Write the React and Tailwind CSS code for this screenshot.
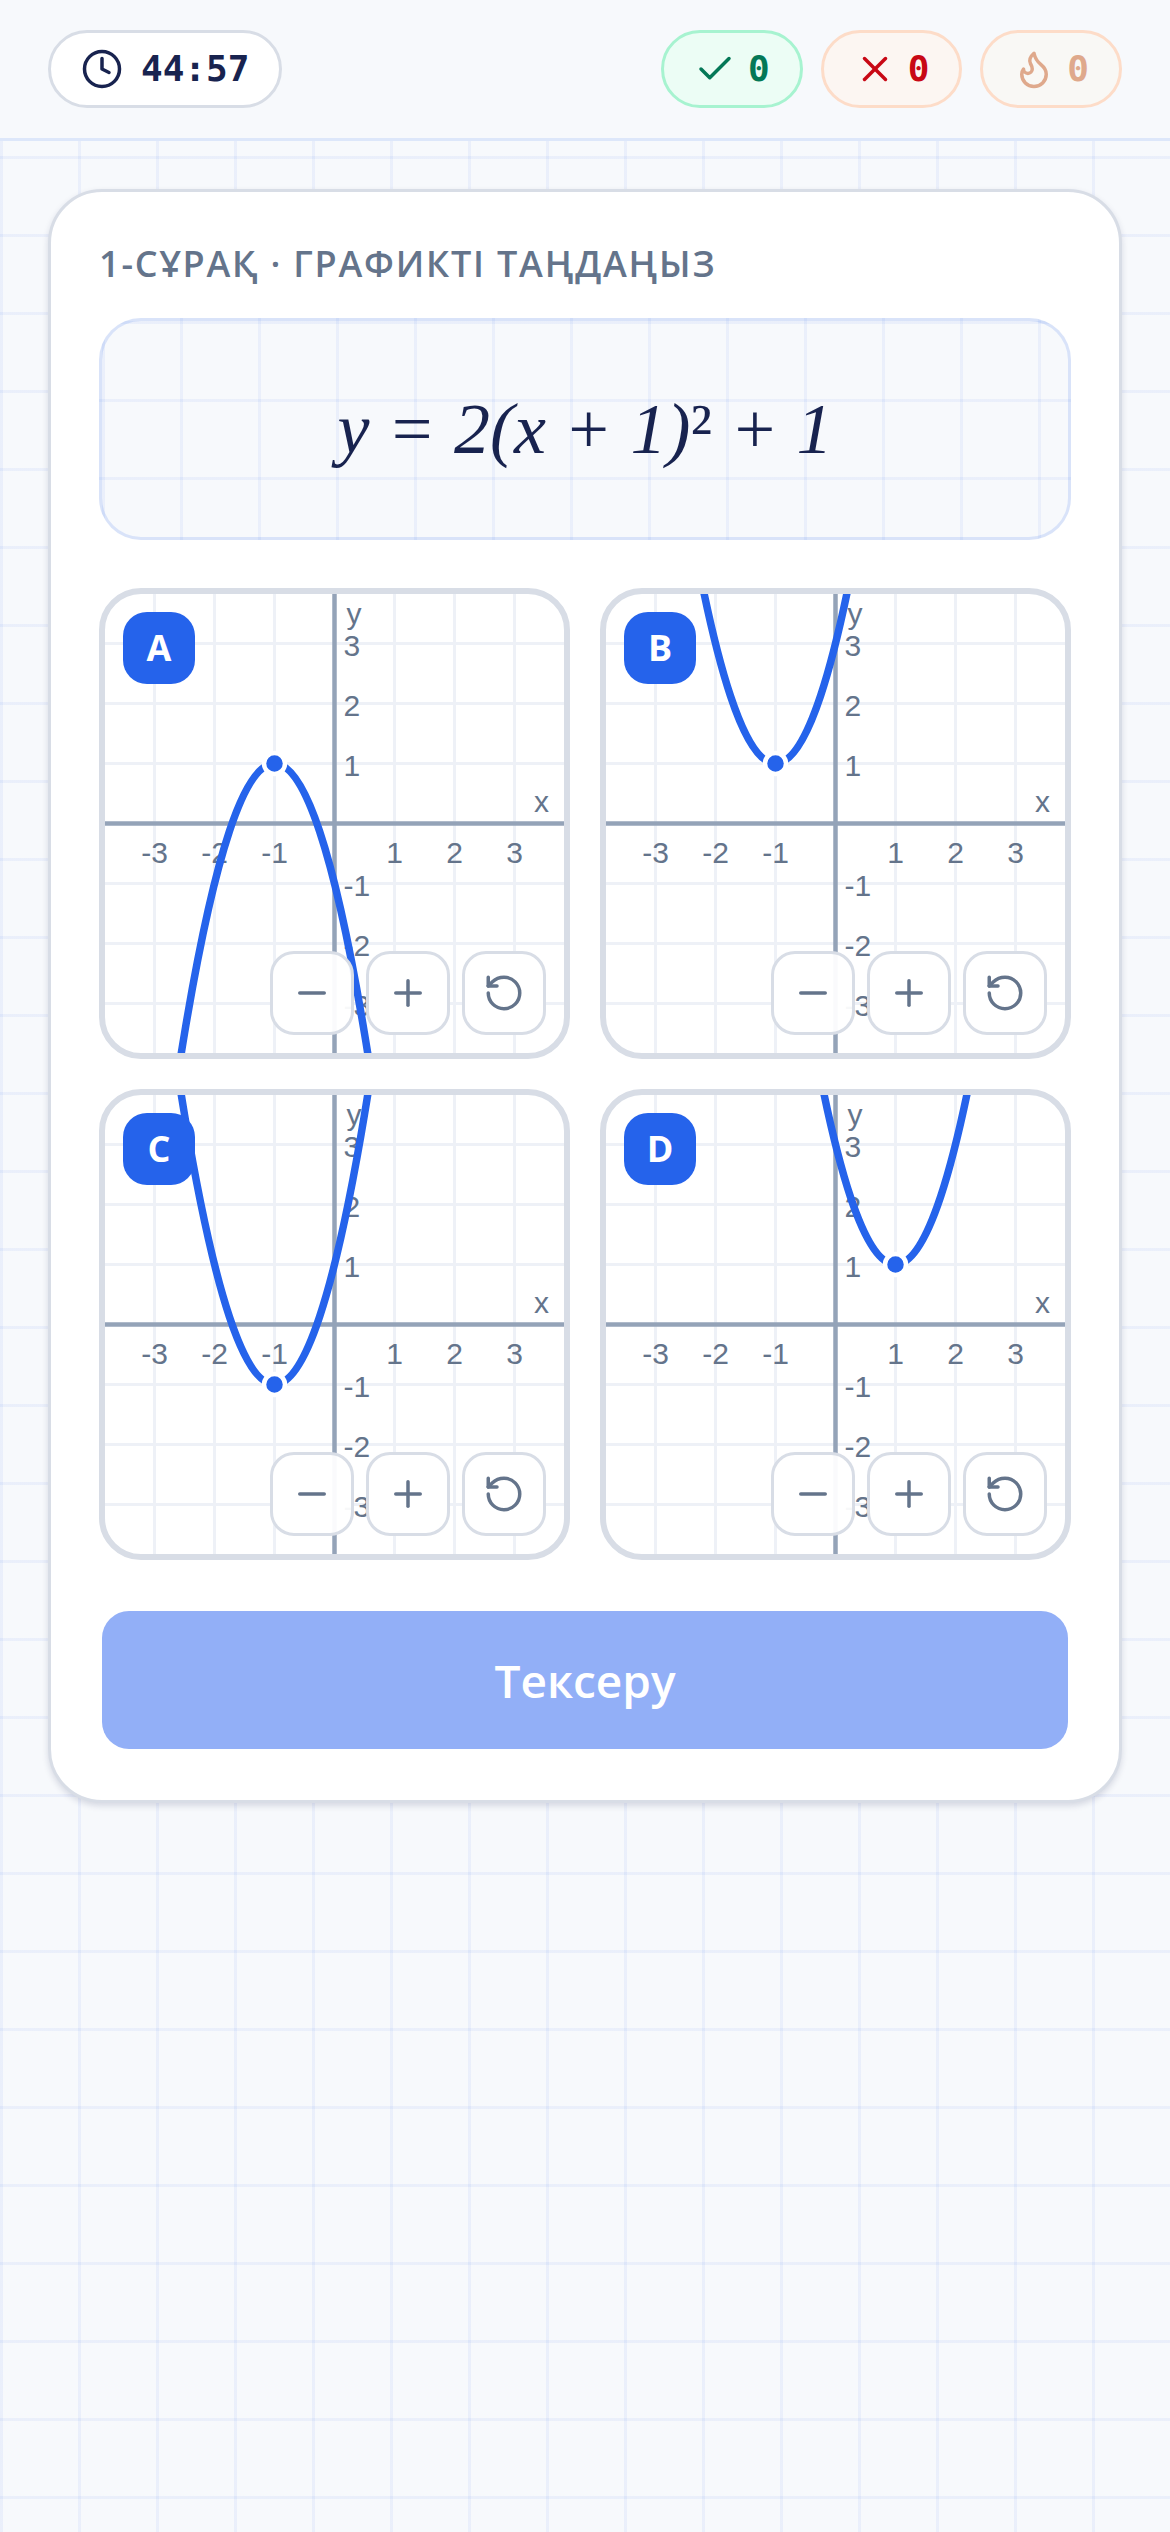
import React, { useState } from 'react';
import { Check, Clock, Minus, Plus, RotateCcw, X } from 'lucide-react';

const SIZE = 459;
const CENTER = SIZE / 2;
const UNIT = 60;

const OPTIONS = [
  { id: 'A', a: -2, h: -1, k: 1 },
  { id: 'B', a: 2, h: -1, k: 1 },
  { id: 'C', a: 2, h: -1, k: -1 },
  { id: 'D', a: 2, h: 1, k: 1 },
];

const FlameIcon = ({ className }) => (
  <svg
    viewBox="0 0 24 24"
    fill="none"
    stroke="currentColor"
    strokeWidth="2"
    strokeLinecap="round"
    strokeLinejoin="round"
    className={className}
    aria-hidden="true"
  >
    <path d="M8.5 14.5A2.5 2.5 0 0 0 11 12c0-1.38-.5-2-1-3-1.072-2.143-.224-4.054 2-6 .5 2.5 2 4.9 4 6.5 2 1.6 3 3.5 3 5.5a7 7 0 1 1-14 0c0-1.153.433-2.294 1-3a2.5 2.5 0 0 0 2.5 2.5z" />
  </svg>
);

const Plot = ({ a, h, k, zoom }) => {
  const unit = UNIT * zoom;
  const range = Math.floor(CENTER / unit);
  const ticks = [];
  for (let i = -range; i <= range; i++) {
    if (i !== 0) ticks.push(i);
  }

  const px = (x) => CENTER + x * unit;
  const py = (y) => CENTER - y * unit;

  // a parabola is exactly one quadratic Bezier segment
  const span = 3;
  const yEnd = k + a * span * span;
  const yControl = k - a * span * span;
  const path = `M${px(h - span)} ${py(yEnd)}Q${px(h)} ${py(yControl)} ${px(h + span)} ${py(yEnd)}`;

  return (
    <svg viewBox={`0 0 ${SIZE} ${SIZE}`} className="block w-full h-full" aria-hidden="true">
      <g stroke="#eef1f7" strokeWidth="3">
        {ticks.map((t) => (
          <g key={t}>
            <line x1={px(t)} y1="0" x2={px(t)} y2={SIZE} />
            <line x1="0" y1={py(t)} x2={SIZE} y2={py(t)} />
          </g>
        ))}
      </g>
      <g stroke="#94a3b8" strokeWidth="4.5">
        <line x1="0" y1={CENTER} x2={SIZE} y2={CENTER} />
        <line x1={CENTER} y1="0" x2={CENTER} y2={SIZE} />
      </g>
      <g fill="#64748b" fontSize="30" fontFamily="'Liberation Sans', Arial, sans-serif">
        {ticks.map((t) => (
          <g key={t}>
            <text x={px(t)} y={CENTER + 39} textAnchor="middle">{t}</text>
            <text x={CENTER + 9} y={py(t) + 12}>{t}</text>
          </g>
        ))}
        <text x={SIZE - 15} y={CENTER - 12} textAnchor="end">x</text>
        <text x={CENTER + 12} y="30">y</text>
      </g>
      <path d={path} fill="none" stroke="#2563eb" strokeWidth="7.5" />
      <circle cx={px(h)} cy={py(k)} r="10.5" fill="#2563eb" stroke="#fff" strokeWidth="4.5" />
    </svg>
  );
};

const ZoomButton = ({ label, icon: Icon, onClick }) => (
  <button
    type="button"
    aria-label={label}
    onClick={onClick}
    className="flex size-21 items-center justify-center rounded-3xl border-3 border-[#d8dde6] bg-white/95 text-[#64748b]"
  >
    <Icon className="size-[42px]" />
  </button>
);

const OptionCard = ({ option, selected, onSelect }) => {
  const [zoom, setZoom] = useState(1);

  return (
    <div
      className={`relative aspect-square overflow-hidden rounded-[42px] border-6 bg-white ${
        selected ? 'border-[#2563eb]' : 'border-[#d8dde6]'
      }`}
    >
      <button type="button" onClick={onSelect} aria-pressed={selected} className="block w-full h-full">
        <Plot a={option.a} h={option.h} k={option.k} zoom={zoom} />
        <span className="absolute top-4.5 left-4.5 flex size-18 items-center justify-center rounded-3xl bg-[#2563eb] text-4xl font-bold text-white">
          {option.id}
        </span>
      </button>
      <div className="absolute right-4.5 bottom-4.5 flex gap-3">
        <ZoomButton label="Кішірейту" icon={Minus} onClick={() => setZoom(Math.max(0.5, zoom / 1.25))} />
        <ZoomButton label="Үлкейту" icon={Plus} onClick={() => setZoom(Math.min(3, zoom * 1.25))} />
        <ZoomButton label="Қалпына келтіру" icon={RotateCcw} onClick={() => setZoom(1)} />
      </div>
    </div>
  );
};

const App = () => {
  const [selected, setSelected] = useState(null);

  return (
    <div className="min-h-screen bg-[#f7f9fc] bg-[linear-gradient(to_right,#2563eb10_3px,transparent_3px),linear-gradient(to_bottom,#2563eb10_3px,transparent_3px)] bg-size-[78px_78px] font-['Open_Sans','Noto_Sans',sans-serif] text-[#18234f]">
      <header className="sticky top-0 z-10 flex items-center justify-between border-b-3 border-[#dde7fa] bg-[#f7f9fc] px-12 py-7.5">
        <div className="flex h-19.5 items-center gap-4.5 rounded-full border-3 border-[#d8dde6] bg-white px-7.5 font-['DejaVu_Sans_Mono',monospace] text-4xl font-bold">
          <Clock className="size-[42px]" />
          44:57
        </div>
        <div className="flex gap-4.5 font-['DejaVu_Sans_Mono',monospace] text-4xl font-bold">
          <div className="flex h-19.5 items-center gap-3 rounded-full border-3 border-[#a7f3d0] bg-[#ecfdf5] px-7.5 text-[#047857]">
            <Check className="size-[42px]" />
            0
          </div>
          <div className="flex h-19.5 items-center gap-3 rounded-full border-3 border-[#fddcc8] bg-[#fcf6f2] px-7.5 text-[#c80815]">
            <X className="size-[42px]" />
            0
          </div>
          <div className="flex h-19.5 items-center gap-3 rounded-full border-3 border-[#fddcc8] bg-[#f9f8f5] px-7.5 text-[#dfa98c]">
            <FlameIcon className="size-[42px]" />
            0
          </div>
        </div>
      </header>

      <main className="p-12">
        <section className="rounded-[54px] border-3 border-[#d8dde6] bg-white p-12 shadow-[0_3px_6px_#18234f26]">
          <h1 className="text-4xl/12 font-semibold tracking-wider text-[#64748b] uppercase">
            1-сұрақ · Графикті таңдаңыз
          </h1>

          <div className="mt-7.5 flex justify-center rounded-[42px] border-3 border-[#2563eb24] bg-[#f7f9fc] bg-[linear-gradient(to_right,#2563eb10_3px,transparent_3px),linear-gradient(to_bottom,#2563eb10_3px,transparent_3px)] bg-size-[78px_78px] py-12">
            <p className="font-['Georgia','Liberation_Serif',serif] text-7xl/[120px] italic">
              y = 2(x + 1)<span className="not-italic">²</span> + 1
            </p>
          </div>

          <div className="mt-12 grid grid-cols-2 gap-7.5">
            {OPTIONS.map((option) => (
              <OptionCard
                key={option.id}
                option={option}
                selected={selected === option.id}
                onSelect={() => setSelected(option.id)}
              />
            ))}
          </div>

          <button
            type="button"
            disabled={!selected}
            className="mt-12 h-36 w-full rounded-[30px] border-3 border-transparent bg-[#2563eb] bg-clip-padding text-[46px] font-semibold text-white disabled:bg-[#92aff7]"
          >
            Тексеру
          </button>
        </section>
      </main>
    </div>
  );
};

export default App;
